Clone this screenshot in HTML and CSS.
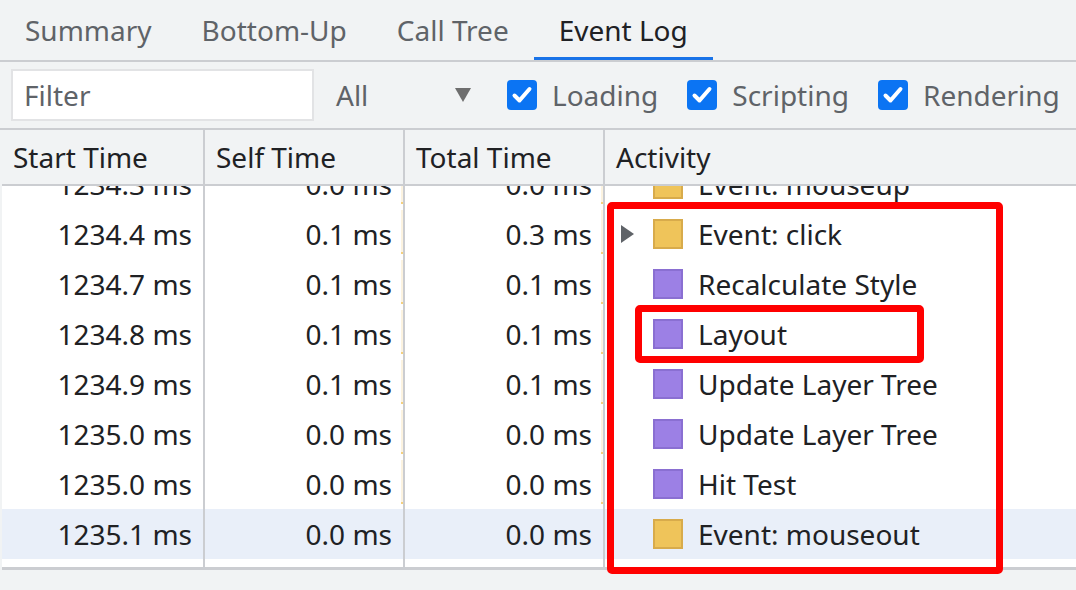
FILE: index.html
```html
<!DOCTYPE html>
<html>
<head>
<meta charset="utf-8">
<link rel="stylesheet" href="styles.css">
</head>
<body>
<div class="tabs">
  <div class="tab">Summary</div>
  <div class="tab">Bottom-Up</div>
  <div class="tab">Call Tree</div>
  <div class="tab active">Event Log</div>
</div>
<div class="toolbar">
  <div class="filter">Filter</div>
  <div class="select"><span>All</span><span class="caret"></span></div>
  <label class="cb first"><span class="box"><svg width="30" height="30" viewBox="0 0 30 30"><path d="M7.5 15.5 L12.5 20.5 L22.5 9" fill="none" stroke="#fff" stroke-width="4" stroke-linecap="round" stroke-linejoin="round"/></svg></span>Loading</label>
  <label class="cb"><span class="box"><svg width="30" height="30" viewBox="0 0 30 30"><path d="M7.5 15.5 L12.5 20.5 L22.5 9" fill="none" stroke="#fff" stroke-width="4" stroke-linecap="round" stroke-linejoin="round"/></svg></span>Scripting</label>
  <label class="cb"><span class="box"><svg width="30" height="30" viewBox="0 0 30 30"><path d="M7.5 15.5 L12.5 20.5 L22.5 9" fill="none" stroke="#fff" stroke-width="4" stroke-linecap="round" stroke-linejoin="round"/></svg></span>Rendering</label>
</div>
<div class="table">
  <div class="row head">
    <div class="cell">Start Time</div>
    <div class="cell">Self Time</div>
    <div class="cell">Total Time</div>
    <div class="cell">Activity</div>
  </div>
  <div class="body">
    <div class="row top">
      <div class="cell num">1234.3 ms</div>
      <div class="cell num">0.0 ms<span class="tb"></span></div>
      <div class="cell num">0.0 ms<span class="tb"></span></div>
      <div class="cell act"><span class="tw"></span><span class="sq y"></span>Event: mouseup</div>
    </div>
    <div class="row">
      <div class="cell num">1234.4 ms</div>
      <div class="cell num">0.1 ms<span class="tb"></span></div>
      <div class="cell num">0.3 ms<span class="tb"></span></div>
      <div class="cell act"><span class="tw"><span class="tri"></span></span><span class="sq y"></span>Event: click</div>
    </div>
    <div class="row">
      <div class="cell num">1234.7 ms</div>
      <div class="cell num">0.1 ms<span class="tb"></span></div>
      <div class="cell num">0.1 ms<span class="tb"></span></div>
      <div class="cell act"><span class="tw"></span><span class="sq p"></span>Recalculate Style</div>
    </div>
    <div class="row">
      <div class="cell num">1234.8 ms</div>
      <div class="cell num">0.1 ms<span class="tb"></span></div>
      <div class="cell num">0.1 ms<span class="tb"></span></div>
      <div class="cell act"><span class="tw"></span><span class="sq p"></span>Layout</div>
    </div>
    <div class="row">
      <div class="cell num">1234.9 ms</div>
      <div class="cell num">0.1 ms<span class="tb"></span></div>
      <div class="cell num">0.1 ms<span class="tb"></span></div>
      <div class="cell act"><span class="tw"></span><span class="sq p"></span>Update Layer Tree</div>
    </div>
    <div class="row">
      <div class="cell num">1235.0 ms</div>
      <div class="cell num">0.0 ms<span class="tb"></span></div>
      <div class="cell num">0.0 ms<span class="tb"></span></div>
      <div class="cell act"><span class="tw"></span><span class="sq p"></span>Update Layer Tree</div>
    </div>
    <div class="row">
      <div class="cell num">1235.0 ms</div>
      <div class="cell num">0.0 ms<span class="tb"></span></div>
      <div class="cell num">0.0 ms<span class="tb"></span></div>
      <div class="cell act"><span class="tw"></span><span class="sq p"></span>Hit Test</div>
    </div>
    <div class="row sel">
      <div class="cell num">1235.1 ms</div>
      <div class="cell num">0.0 ms</div>
      <div class="cell num">0.0 ms</div>
      <div class="cell act"><span class="tw"></span><span class="sq y"></span>Event: mouseout</div>
    </div>
    <div class="row filler">
      <div class="cell"></div>
      <div class="cell"></div>
      <div class="cell"></div>
      <div class="cell"></div>
    </div>
  </div>
</div>
<div class="mark outer"></div>
<div class="mark inner"></div>
</body>
</html>
```
FILE: styles.css
```css
html, body {
  margin: 0;
  padding: 0;
}
body {
  width: 1076px;
  height: 590px;
  overflow: hidden;
  background: #f1f3f4;
  font-family: "Noto Sans", "Open Sans", sans-serif;
  font-size: 28px;
  color: #202124;
  position: relative;
}
.tabs {
  display: flex;
  height: 60px;
  border-bottom: 2px solid #cbcdd1;
}
.tab {
  box-sizing: border-box;
  height: 60px;
  padding: 0 25px;
  display: flex;
  align-items: center;
  color: #5f6368;
}
.tab.active {
  color: #202124;
  border-bottom: 3px solid #1a73e8;
  padding-top: 3px;
}
.toolbar {
  display: flex;
  align-items: center;
  height: 66px;
  border-bottom: 2px solid #cbcdd1;
  padding-left: 11px;
  color: #5f6368;
}
.filter {
  box-sizing: border-box;
  width: 303px;
  height: 52px;
  border: 2px solid #e2e3e5;
  background: #fff;
  padding-left: 11px;
  display: flex;
  align-items: center;
  color: #5f6368;
}
.select {
  margin-left: 22px;
  width: 135px;
  display: flex;
  align-items: center;
  justify-content: space-between;
}
.caret {
  width: 0;
  height: 0;
  border-left: 8px solid transparent;
  border-right: 8px solid transparent;
  border-top: 14px solid #6e6e6e;
}
.cb {
  display: flex;
  align-items: center;
  gap: 15px;
  margin-left: 29px;
}
.cb.first {
  margin-left: 36px;
}
.box {
  width: 30px;
  height: 30px;
  border-radius: 4px;
  background: #0b74f3;
  display: flex;
}
.table {
  margin-left: 2px;
}
.row {
  display: grid;
  grid-template-columns: 203px 200px 200px 1fr;
  height: 50px;
  background: #fff;
  flex-shrink: 0;
}
.row.head {
  height: 54px;
  background: #f1f3f4;
  border-bottom: 2px solid #cbcdd1;
}
.cell {
  box-sizing: border-box;
  border-right: 2px solid #cbcdd1;
  padding: 0 11px;
  display: flex;
  align-items: center;
  white-space: nowrap;
  position: relative;
}
.cell:last-child {
  border-right: none;
}
.num {
  justify-content: flex-end;
}
.act {
  padding-left: 16px;
}
.tw {
  width: 32px;
  flex-shrink: 0;
  display: flex;
  align-items: center;
}
.tri {
  width: 0;
  height: 0;
  border-top: 9px solid transparent;
  border-bottom: 9px solid transparent;
  border-left: 13px solid #5f6368;
}
.sq {
  box-sizing: border-box;
  width: 30px;
  height: 30px;
  border: 2px solid;
  margin-right: 15px;
  flex-shrink: 0;
}
.sq.y {
  background: #efc45a;
  border-color: #d8ab4b;
}
.sq.p {
  background: #9c80e5;
  border-color: #8a6fd2;
}
.tb {
  position: absolute;
  right: 0;
  top: 1px;
  bottom: 5px;
  width: 2px;
  background: #fcf3e0;
  border-bottom: 2px solid #f5d07e;
}
.body {
  height: 381px;
  overflow: hidden;
  display: flex;
  flex-direction: column;
  background: #fff;
  border-bottom: 3px solid #cbcdd1;
}
.row.top {
  margin-top: -27px;
}
.row.sel {
  background: #e9eff9;
}
.row.filler {
  flex: 1;
  height: auto;
}
.mark {
  position: absolute;
  box-sizing: border-box;
  border: 7px solid #ff0000;
  border-radius: 5px;
}
.mark.outer {
  left: 607px;
  top: 202px;
  width: 396px;
  height: 372px;
}
.mark.inner {
  left: 635px;
  top: 305px;
  width: 289px;
  height: 58px;
}
```
